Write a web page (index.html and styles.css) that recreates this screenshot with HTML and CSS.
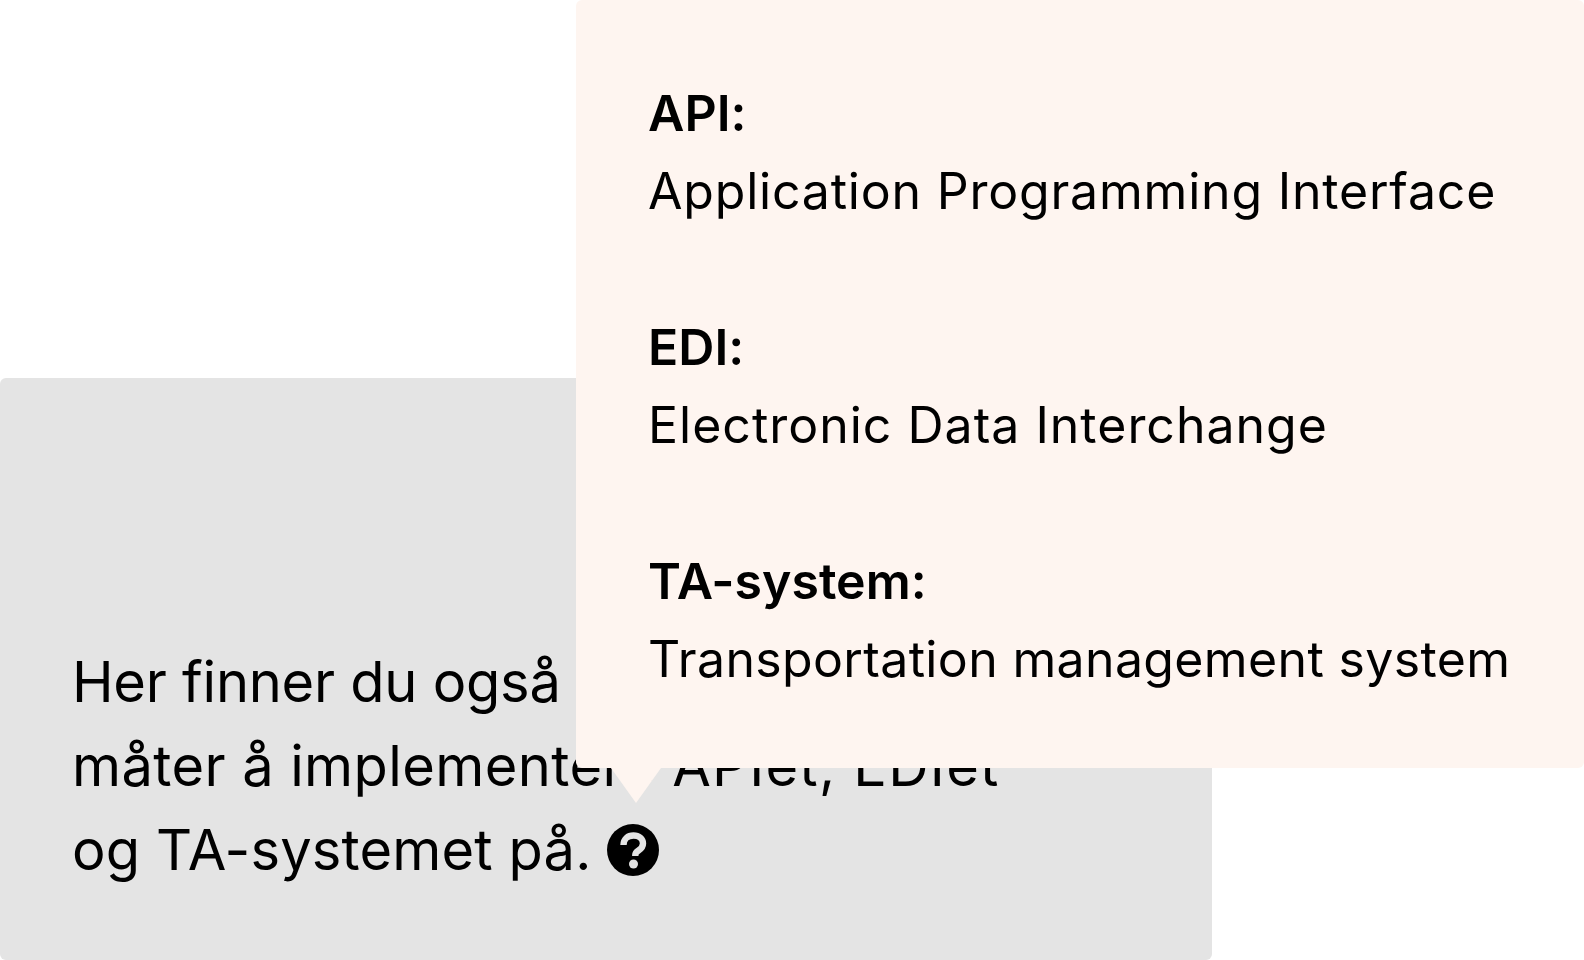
FILE: index.html
```html
<!DOCTYPE html>
<html lang="no">
<head>
    <meta charset="UTF-8">
    <meta name="viewport" content="width=device-width, initial-scale=1.0">
    <title>Ordforklaring</title>
    <link rel="stylesheet" href="styles.css">
</head>
<body>
    <div class="card">
        <p class="card-text">
            <span class="line line-first">Her finner du også flere</span>
            <span class="line line-middle">måter å implementere <span class="abbr">APIet, EDIet</span></span>
            <span class="line line-last">og TA-systemet på.
            <svg class="help-icon" viewBox="0 0 52 52" aria-hidden="true">
                <circle cx="26" cy="26" r="26" fill="#000"/>
                <path d="M16.500 21c0-6 4.300-9.500 10-9.500 5.500 0 9.500 3.300 9.500 8 0 3.700-2 5.400-4.500 7-2.200 1.400-3.200 2.300-3.200 4.500v1" fill="none" stroke="#e4e4e4" stroke-width="6.400"/>
                <circle cx="26.500" cy="40" r="4.500" fill="#e4e4e4"/>
            </svg></span>
        </p>
    </div>
    <div class="tooltip">
        <dl class="terms">
            <dt>API:</dt>
            <dd>Application Programming Interface</dd>
            <dt>EDI:</dt>
            <dd>Electronic Data Interchange</dd>
            <dt>TA-system:</dt>
            <dd>Transportation management system</dd>
        </dl>
    </div>
</body>
</html>
```

FILE: styles.css
```css
html, body {
    height: 100%;
}
body {
    margin: 0;
    position: relative;
    overflow: hidden;
    background-color: #fff;
    color: #000;
    font-family: Inter, "Liberation Sans", sans-serif;
    font-feature-settings: "calt" 0;
}
.card {
    box-sizing: border-box;
    width: 1212px;
    height: 582px;
    margin-top: 378px;
    padding: 0 72px 68px;
    display: flex;
    align-items: flex-end;
    background-color: #e4e4e4;
    border-radius: 6px;
}
.card-text {
    margin: 0;
    font-size: 56px;
    line-height: 84px;
    white-space: nowrap;
}
.line {
    display: block;
}
.line-first {
    letter-spacing: -0.25px;
}
.line-middle {
    letter-spacing: 0.4px;
}
.line-last {
    letter-spacing: 0.15px;
}
.abbr {
    letter-spacing: 1.25px;
}
.help-icon {
    width: 52px;
    height: 52px;
    vertical-align: -6px;
    margin-left: 0;
}
.tooltip {
    position: absolute;
    top: 0;
    left: 576px;
    box-sizing: border-box;
    width: 1008px;
    height: 768px;
    padding: 74px 72px 0;
    background-color: #fef5f0;
    border-radius: 6px;
}
.tooltip::after {
    content: "";
    position: absolute;
    top: 100%;
    left: 35px;
    border-top: 35px solid #fef5f0;
    border-left: 25px solid transparent;
    border-right: 25px solid transparent;
}
.terms {
    margin: 0;
    font-size: 50px;
    line-height: 78px;
}
.terms dt {
    font-weight: 600;
}
.terms dd {
    margin: 0 0 78px;
    white-space: nowrap;
    letter-spacing: 0.8px;
}
.terms dd:nth-of-type(2) {
    letter-spacing: 1px;
}
.terms dd:nth-of-type(3) {
    letter-spacing: 0.35px;
}
```
